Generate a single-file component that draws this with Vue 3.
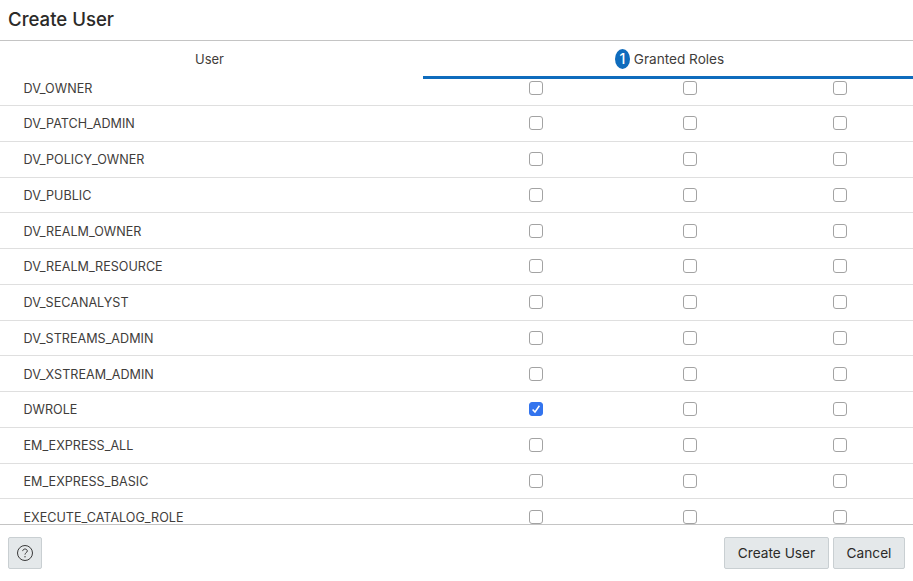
<script setup>
const roles = [
  { name: 'DV_OWNER' },
  { name: 'DV_PATCH_ADMIN' },
  { name: 'DV_POLICY_OWNER' },
  { name: 'DV_PUBLIC' },
  { name: 'DV_REALM_OWNER' },
  { name: 'DV_REALM_RESOURCE' },
  { name: 'DV_SECANALYST' },
  { name: 'DV_STREAMS_ADMIN' },
  { name: 'DV_XSTREAM_ADMIN' },
  { name: 'DWROLE', granted: true },
  { name: 'EM_EXPRESS_ALL' },
  { name: 'EM_EXPRESS_BASIC' },
  { name: 'EXECUTE_CATALOG_ROLE' },
]
</script>

<template>
  <div class="dialog">
    <header class="title">Create User</header>

    <div class="steps">
      <div class="step">User</div>
      <div class="step active">
        <span class="badge">1</span>
        <span>Granted Roles</span>
      </div>
    </div>

    <div class="body">
      <div class="list">
        <div v-for="role in roles" :key="role.name" class="row">
          <span class="name">{{ role.name }}</span>
          <span class="cell"><span class="check" :class="{ on: role.granted }">
            <svg v-if="role.granted" width="10" height="10" viewBox="0 0 10 10">
              <path d="M1.6 5.4 L4 8 L8.4 1.8" fill="none" stroke="#fff" stroke-width="1.5" />
            </svg>
          </span></span>
          <span class="cell"><span class="check"></span></span>
          <span class="cell"><span class="check"></span></span>
        </div>
      </div>
    </div>

    <footer class="footer">
      <button type="button" class="btn help" aria-label="Help">
        <svg width="18" height="18" viewBox="0 0 18 18">
          <circle cx="9" cy="9" r="7.5" fill="none" stroke="#3a3a3a" stroke-width="1" />
          <path d="M6.7 7.1 C6.8 5.7 7.8 5 9 5 C10.3 5 11.3 5.8 11.3 7 C11.3 8.6 9 8.7 9 10.6" fill="none" stroke="#3a3a3a" stroke-width="1" />
          <circle cx="9" cy="12.8" r="0.7" fill="#3a3a3a" />
        </svg>
      </button>
      <div class="actions">
        <button type="button" class="btn create">Create User</button>
        <button type="button" class="btn cancel">Cancel</button>
      </div>
    </footer>
  </div>
</template>

<style>
html, body {
  margin: 0;
  background: #fff;
}
</style>

<style scoped>
.dialog {
  width: 913px;
  height: 581px;
  display: flex;
  flex-direction: column;
  font-family: Inter, "Liberation Sans", sans-serif;
  font-size: 12.6px;
  color: #3f3d3b;
  overflow: hidden;
}
.title {
  flex: none;
  height: 41px;
  box-sizing: border-box;
  padding: 7px 8px 0;
  font-size: 18.6px;
  line-height: 24px;
  font-weight: 500;
  color: #2b2a28;
  border-bottom: 1px solid #c4c4c4;
}
.steps {
  display: grid;
  grid-template-columns: 423px 1fr;
  height: 38px;
  flex: none;
}
.step {
  display: flex;
  align-items: center;
  justify-content: center;
  gap: 4px;
  padding-bottom: 2px;
  font-size: 13px;
}
.step:first-child {
  padding-right: 4px;
}
.step.active {
  border-bottom: 3px solid #0f6cbd;
  padding-bottom: 0;
  padding-left: 3px;
  box-sizing: border-box;
  font-size: 13.6px;
}
.badge {
  width: 15px;
  height: 20px;
  border-radius: 50%;
  background: #0f6cbd;
  color: #fff;
  font-size: 14px;
  font-weight: 500;
  display: flex;
  align-items: center;
  justify-content: center;
}
.body {
  flex: 1;
  min-height: 0;
  overflow: hidden;
}
.list {
  margin-top: -8.56px;
}
.row {
  display: grid;
  grid-template-columns: 459px 154px 154px 146px;
  align-items: center;
  height: 35.76px;
  box-sizing: border-box;
  border-bottom: 1px solid #dfdfdf;
}
.name {
  padding-left: 23.5px;
  padding-top: 0.6px;
}
.cell {
  display: flex;
  justify-content: center;
  padding-bottom: 0.6px;
}
.check {
  width: 14px;
  height: 14px;
  box-sizing: border-box;
  border: 1px solid #a3a3a3;
  border-radius: 3px;
  background: #fff;
  display: flex;
  align-items: center;
  justify-content: center;
}
.check.on {
  background: #3374ee;
  border-color: #3374ee;
}
.footer {
  flex: none;
  height: 57px;
  box-sizing: border-box;
  border-top: 1px solid #c4c4c4;
  padding: 12px 8px 0;
  display: flex;
  justify-content: space-between;
  align-items: flex-start;
}
.actions {
  display: flex;
  gap: 4px;
}
.btn {
  height: 32px;
  border: 1px solid #c9cfd2;
  border-radius: 2px;
  background: #e4e8ea;
  color: #2b2a28;
  font-family: inherit;
  font-size: 13.7px;
  cursor: pointer;
}
.create {
  width: 105px;
  padding: 0;
}
.cancel {
  width: 72px;
  padding: 0;
}
.help {
  width: 34px;
  padding: 0;
  display: flex;
  align-items: center;
  justify-content: center;
}
</style>
